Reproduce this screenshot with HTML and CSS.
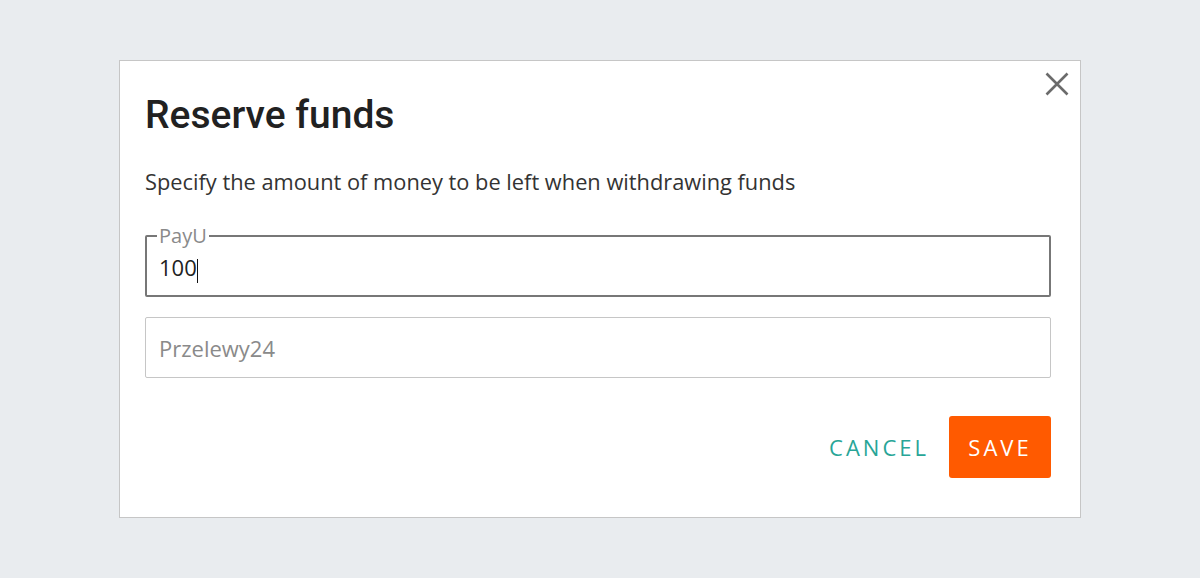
FILE: index.html
```html
<!DOCTYPE html>
<html lang="en">
<head>
  <meta charset="UTF-8" />
  <meta name="viewport" content="width=device-width, initial-scale=1.0" />
  <title>Reserve funds</title>
  <link rel="stylesheet" href="styles.css">
</head>
<body>
  <!-- Reserve funds dialog -->
  <div class="dialog" role="dialog" aria-labelledby="dialogTitle">
    <button class="close-button" aria-label="Close">
      <svg width="24" height="24" viewBox="0 0 24 24">
        <path d="M1.5 1.5 L22.5 22.5 M22.5 1.5 L1.5 22.5" stroke="#6b6b6b" stroke-width="2.6" fill="none" />
      </svg>
    </button>

    <h1 id="dialogTitle" class="dialog-title">Reserve funds</h1>
    <p class="dialog-text">Specify the amount of money to be left when withdrawing funds</p>

    <fieldset class="field field-focused">
      <legend>PayU</legend>
      <div class="field-value">100<span class="caret"></span></div>
    </fieldset>

    <div class="field">
      <input type="text" placeholder="Przelewy24" aria-label="Przelewy24">
    </div>

    <div class="dialog-actions">
      <button class="cancel-button">Cancel</button>
      <button class="save-button">Save</button>
    </div>
  </div>
</body>
</html>
```

FILE: styles.css
```css
:root {
  --page-bg: #e9ecef;
  --border-grey: #c6c6c6;
  --text-dark: #222;
  --text-muted: #8a8a8a;
  --teal: #28a597;
  --orange: #ff5a00;
}

* {
  margin: 0;
  padding: 0;
  box-sizing: border-box;
}
body {
  background: var(--page-bg);
  font-family: 'Open Sans', sans-serif;
  color: var(--text-dark);
  padding-top: 60px;
}

/* Dialog box */
.dialog {
  position: relative;
  width: 962px;
  height: 458px;
  margin: 0 auto;
  background: #fff;
  border: 1px solid var(--border-grey);
  padding: 31px 29px 0 25px;
}
.close-button {
  position: absolute;
  top: 11px;
  right: 11px;
  width: 24px;
  height: 24px;
  border: none;
  background: none;
  cursor: pointer;
}
.close-button svg { display: block; }

.dialog-title {
  font-family: Roboto, sans-serif;
  font-weight: 500;
  font-size: 39px;
  line-height: 46px;
  color: #212121;
}
.dialog-text {
  font-size: 21.8px;
  line-height: 30px;
  color: #333;
  margin-top: 29px;
}

/* Inputs */
.field {
  height: 61px;
  border: 1px solid var(--border-grey);
  border-radius: 2px;
  margin-top: 20px;
}
.field input {
  width: 100%;
  height: 100%;
  border: none;
  outline: none;
  background: transparent;
  padding: 0 13px;
  font-family: 'Open Sans', sans-serif;
  font-size: 22px;
  color: var(--text-dark);
}
.field input::placeholder { color: var(--text-muted); }

fieldset.field-focused {
  border: 2px solid #777;
  margin-top: 28px;
  height: 72px;
  padding: 0 12px;
}
.field-focused legend {
  font-size: 20px;
  line-height: 22px;
  color: var(--text-muted);
  padding: 0 2px;
  margin-left: -2px;
}
.field-value {
  font-size: 22px;
  line-height: 30px;
  margin-top: 5px;
}
.caret {
  display: inline-block;
  width: 1px;
  height: 24px;
  background: #111;
  vertical-align: -7px;
}

/* Footer buttons */
.dialog-actions {
  display: flex;
  justify-content: flex-end;
  align-items: center;
  margin-top: 38px;
}
.dialog-actions button {
  font-family: 'Open Sans', sans-serif;
  font-size: 22px;
  text-transform: uppercase;
  border: none;
  cursor: pointer;
  height: 62px;
}
.cancel-button {
  background: none;
  color: var(--teal);
  letter-spacing: 3px;
  padding: 0 20px;
}
.save-button {
  background: var(--orange);
  color: #fff;
  letter-spacing: 3px;
  border-radius: 3px;
  width: 102px;
}
```
